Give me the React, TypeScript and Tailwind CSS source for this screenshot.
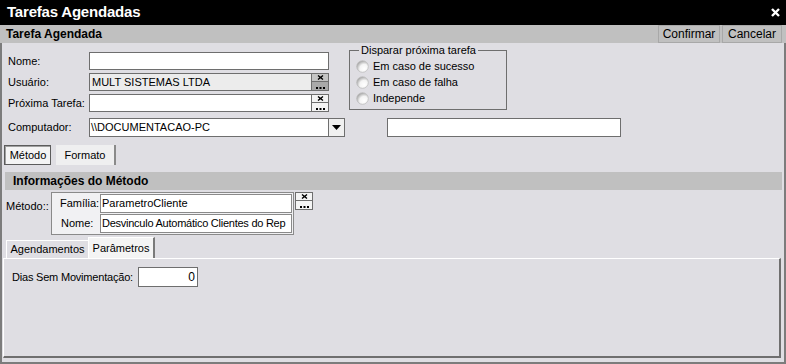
import React from 'react';

const font = { fontFamily: '"Liberation Sans", Arial, sans-serif' };

const SmallButtons: React.FC<{ top: string; bottom: string }> = ({ top, bottom }) => (
  <div className="flex flex-col w-[18px] h-[18px] border border-[#6e6e6e]">
    <div className={`flex-1 flex items-center justify-center border-b border-[#6e6e6e] ${top}`}>
      <svg width="7" height="5" viewBox="0 0 7 5">
        <path d="M1 0.5 L6 4.5 M6 0.5 L1 4.5" stroke="#000" strokeWidth="1.4" />
      </svg>
    </div>
    <div className={`flex-1 flex items-end justify-center pb-[1px] ${bottom}`}>
      <svg width="9" height="2" viewBox="0 0 9 2">
        <rect x="0" y="0" width="2" height="2" fill="#000" />
        <rect x="3.5" y="0" width="2" height="2" fill="#000" />
        <rect x="7" y="0" width="2" height="2" fill="#000" />
      </svg>
    </div>
  </div>
);

const Radio: React.FC<{ label: string }> = ({ label }) => (
  <div className="flex items-center h-[16px] gap-[4px]">
    <svg width="13" height="13" viewBox="0 0 13 13">
      <defs>
        <radialGradient id="rg" cx="0.65" cy="0.7" r="0.7">
          <stop offset="0" stopColor="#ffffff" />
          <stop offset="0.55" stopColor="#f4f4f4" />
          <stop offset="1" stopColor="#a8a8a8" />
        </radialGradient>
      </defs>
      <circle cx="6.5" cy="6.5" r="5.8" fill="url(#rg)" stroke="#bdbdbd" strokeWidth="0.8" />
    </svg>
    <span>{label}</span>
  </div>
);

const Field: React.FC<{ label: string; children: React.ReactNode }> = ({ label, children }) => (
  <div className="flex items-center h-[18px]">
    <span className="w-[81px] shrink-0">{label}</span>
    {children}
  </div>
);

export default function App() {
  return (
    <div style={font} className="w-[786px] h-[364px] bg-[#dfdee3] text-[11px] text-black flex flex-col overflow-hidden">
      {/* title bar */}
      <div className="h-[25px] bg-black flex items-center justify-between pl-[7px] pr-[6px] shrink-0">
        <span className="text-white font-bold text-[15px] tracking-[-0.2px]">Tarefas Agendadas</span>
        <svg width="9" height="9" viewBox="0 0 9 9">
          <path d="M1 1 L8 8 M8 1 L1 8" stroke="#fff" strokeWidth="2.4" />
        </svg>
      </div>

      {/* header */}
      <div className="h-[18px] bg-[#c0c0c0] flex items-center justify-between pl-[6px] shrink-0">
        <span className="font-bold text-[12px]">Tarefa Agendada</span>
        <div className="flex h-full gap-[2px] pr-[4px]">
          <div className="w-[62px] h-[18px] border border-[#a8a8a8] flex items-center justify-center text-[12px]">Confirmar</div>
          <div className="w-[60px] h-[18px] border border-[#a8a8a8] flex items-center justify-center text-[12px]">Cancelar</div>
        </div>
      </div>

      <div className="flex-1 flex flex-col border-x-2 border-b-2 border-[#7c7c7c]">
        {/* top form */}
        <div className="flex items-start pl-[6px] pt-[7px]">
          <div className="flex flex-col gap-[3px] pt-[2px]">
            <Field label="Nome:">
              <div className="w-[240px] h-[18px] bg-white border border-[#6e6e6e]" />
            </Field>
            <Field label="Usuário:">
              <div className="w-[222px] h-[18px] bg-[#ececec] border border-[#6e6e6e] border-r-0 pl-[2px] flex items-center">MULT SISTEMAS LTDA</div>
              <SmallButtons top="bg-[#c4c4c4]" bottom="bg-[#a9a9a9]" />
            </Field>
            <Field label="Próxima Tarefa:">
              <div className="w-[222px] h-[18px] bg-white border border-[#6e6e6e] border-r-0" />
              <SmallButtons top="bg-[#f4f4f4]" bottom="bg-[#f4f4f4]" />
            </Field>
          </div>
          <div className="ml-[20px] relative w-[158px] h-[60px] border border-[#6e6e6e]">
            <span className="absolute -top-[8px] left-[9px] bg-[#dfdee3] px-[2px] leading-[14px]">Disparar próxima tarefa</span>
            <div className="flex flex-col pl-[6px] pt-[7px]">
              <Radio label="Em caso de sucesso" />
              <Radio label="Em caso de falha" />
              <Radio label="Independe" />
            </div>
          </div>
        </div>

        <div className="flex items-center pl-[6px] mt-[6px]">
          <Field label="Computador:">
            <div className="w-[240px] h-[19px] bg-white border border-[#6e6e6e] pl-[1px] flex items-center">\\DOCUMENTACAO-PC</div>
            <div className="w-[16px] h-[19px] bg-[#f0f0f0] border border-l-0 border-[#6e6e6e] flex items-center justify-center">
              <svg width="9" height="5" viewBox="0 0 9 5">
                <path d="M0 0 H9 L4.5 5 Z" fill="#000" />
              </svg>
            </div>
          </Field>
          <div className="ml-[42px] w-[234px] h-[19px] bg-white border border-[#6e6e6e]" />
        </div>

        {/* top tabs */}
        <div className="flex items-end pl-[2px] mt-[8px] h-[20px] gap-[5px]">
          <div className="h-[20px] w-[47px] border border-[#5c5c5c] bg-[#f4f4f4] flex items-center justify-center">
            <div className="border-t border-l border-[#a0a0a0] w-full h-full flex items-center justify-center">Método</div>
          </div>
          <div className="h-[20px] w-[60px] bg-[#efeff0] border-r-2 border-[#8a8a8a] flex items-center justify-center">Formato</div>
        </div>

        {/* info header */}
        <div className="mt-[7px] ml-[3px] mr-[2px] h-[18px] bg-[#c0c0c0] flex items-center pl-[8px]">
          <span className="font-bold text-[12px]">Informações do Método</span>
        </div>

        {/* metodo */}
        <div className="flex items-start mt-[2px] pl-[4px]">
          <span className="w-[45px] pt-[6px]">Método::</span>
          <div className="w-[243px] h-[43px] border border-[#8a8a8a] bg-[#f1f1f3] flex flex-col gap-[1px] pt-[1px] pl-[8px]">
            <div className="flex items-center h-[19px]">
              <span className="w-[40px]">Família:</span>
              <div className="w-[192px] h-[19px] bg-white border border-[#8a8a8a] pl-[1px] flex items-center">ParametroCliente</div>
            </div>
            <div className="flex items-center h-[19px]">
              <span className="w-[40px] pl-[1px]">Nome:</span>
              <div className="w-[192px] h-[19px] bg-white border border-[#8a8a8a] pl-[1px] flex items-center whitespace-nowrap overflow-hidden tracking-[-0.25px]">Desvinculo Automático Clientes do Rep</div>
            </div>
          </div>
          <div className="ml-[1px]">
            <SmallButtons top="bg-[#f4f4f4]" bottom="bg-[#f4f4f4]" />
          </div>
        </div>

        {/* bottom tabs */}
        <div className="flex items-end pl-[4px] mt-[2px] h-[21px]">
          <div className="h-[18px] w-[82px] flex items-center justify-center border-l border-t border-white">Agendamentos</div>
          <div className="h-[21px] w-[67px] bg-[#f4f4f4] border-l border-t border-white border-r-2 border-r-[#7a7a7a] flex items-start pt-[2px] justify-center">Parâmetros</div>
        </div>

        {/* panel */}
        <div className="ml-[1px] mr-[3px] h-[100px] border-l border-t border-white border-r-2 border-b-2 border-r-[#6f6f6f] border-b-[#6f6f6f] pt-[8px] pl-[8px]">
          <div className="flex items-center">
            <span className="tracking-[-0.2px]">Dias Sem Movimentação:</span>
            <div className="ml-[5px] w-[60px] h-[20px] bg-white border border-[#6e6e6e] flex items-center justify-end pr-[2px] text-[12px]">0</div>
          </div>
        </div>
      </div>
    </div>
  );
}
